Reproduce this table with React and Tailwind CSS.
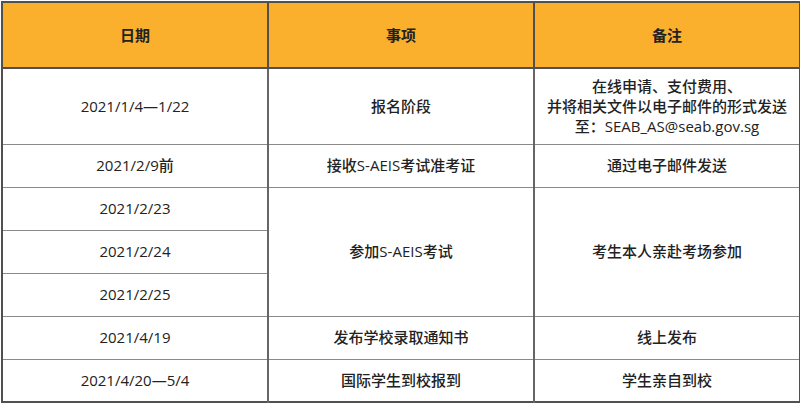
export default function App() {
  const font = { fontFamily: '"Open Sans", "Noto Sans CJK SC", sans-serif' };
  const td = "border border-[#8a8a8a] text-center align-middle p-0";
  const tdr = td + " border-r-2 border-r-[#666]";
  return (
    <div className="w-[800px] h-[403px] bg-white pt-[1px] pl-[1px]" style={font}>
      <table className="w-[798px] h-[401px] border-collapse border-2 border-[#505050] text-[15px] font-medium text-[#222] table-fixed">
        <colgroup>
          <col className="w-[266px]" />
          <col className="w-[266px]" />
          <col className="w-[266px]" />
        </colgroup>
        <tbody>
          <tr className="h-[66px] bg-[#fbb02d]">
            <th className="border-2 border-[#505050] font-bold text-[15px] text-[#222]">日期</th>
            <th className="border-2 border-[#505050] font-bold text-[15px] text-[#222]">事项</th>
            <th className="border-2 border-[#505050] font-bold text-[15px] text-[#222]">备注</th>
          </tr>
          <tr className="h-[76px]">
            <td className={tdr}>2021/1/4—1/22</td>
            <td className={tdr}>报名阶段</td>
            <td className={td + " leading-[20px]"}>
              在线申请、支付费用、<br />
              并将相关文件以电子邮件的形式发送<br />
              至：SEAB_AS@seab.gov.sg
            </td>
          </tr>
          <tr className="h-[43px]">
            <td className={tdr}>2021/2/9前</td>
            <td className={tdr}>接收S-AEIS考试准考证</td>
            <td className={td}>通过电子邮件发送</td>
          </tr>
          <tr className="h-[43px]">
            <td className={tdr}>2021/2/23</td>
            <td rowSpan={3} className={tdr}>参加S-AEIS考试</td>
            <td rowSpan={3} className={td}>考生本人亲赴考场参加</td>
          </tr>
          <tr className="h-[43px]">
            <td className={tdr}>2021/2/24</td>
          </tr>
          <tr className="h-[43px]">
            <td className={tdr}>2021/2/25</td>
          </tr>
          <tr className="h-[43px]">
            <td className={tdr}>2021/4/19</td>
            <td className={tdr}>发布学校录取通知书</td>
            <td className={td}>线上发布</td>
          </tr>
          <tr className="h-[43px]">
            <td className={tdr}>2021/4/20—5/4</td>
            <td className={tdr}>国际学生到校报到</td>
            <td className={td}>学生亲自到校</td>
          </tr>
        </tbody>
      </table>
    </div>
  );
}
